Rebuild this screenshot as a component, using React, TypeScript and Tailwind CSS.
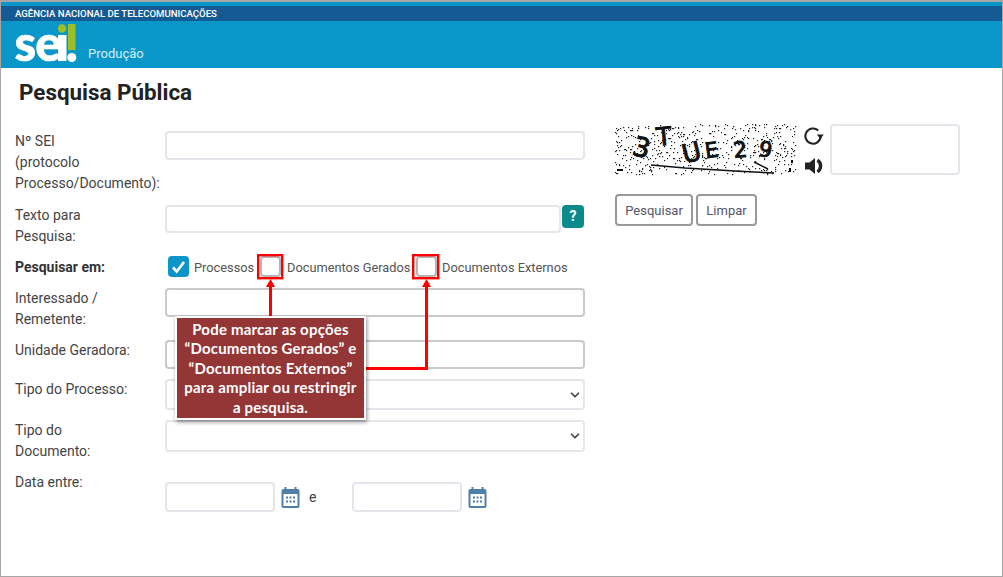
import { ChevronDown } from "lucide-react";

const captchaDots: [number, number][] = [];
let semente = 17;
for (let i = 0; i < 520; i++) {
  semente = (semente * 1103515245 + 12345) % 2147483648;
  const x = (semente >> 8) % 181;
  semente = (semente * 1103515245 + 12345) % 2147483648;
  captchaDots.push([x, (semente >> 8) % 51]);
}

function Logo() {
  return (
    <svg width="62" height="40" viewBox="0 0 62 40" className="block overflow-visible">
      <text x="-0.5" y="37" fill="#fff" stroke="#fff" strokeWidth="0.6" fontFamily="Lato, sans-serif" fontWeight="900" fontSize="49" letterSpacing="-1">
        se
      </text>
      <rect x="43" y="11" width="8.5" height="26" fill="#fff" />
      <circle cx="47" cy="4.5" r="4.2" fill="#9bbf25" />
      <rect x="53" y="0" width="7.5" height="26" fill="#9bbf25" />
      <circle cx="56.8" cy="33.5" r="4.5" fill="#fff" />
    </svg>
  );
}

function Captcha() {
  return (
    <svg width="181" height="51" viewBox="0 0 181 51" className="block shrink-0 overflow-visible">
      {captchaDots.map(([x, y], i) => (
        <rect key={i} x={x} y={y} width="1.2" height="1.2" fill="#222" />
      ))}
      <g fill="#111" stroke="#111" strokeWidth="0.9" fontFamily="'DejaVu Sans', sans-serif">
        <text x="18" y="33" fontSize="27" transform="rotate(14 27 24)">3</text>
        <text x="41" y="21" fontSize="25" transform="rotate(-5 50 10)">T</text>
        <text x="67" y="37" fontSize="26" transform="rotate(-14 78 28)">U</text>
        <text x="90" y="33" fontSize="21" transform="rotate(-8 99 26)">E</text>
        <text x="118" y="33" fontSize="22" transform="rotate(-6 127 25)">2</text>
        <text x="144" y="33" fontSize="21" transform="rotate(8 152 25)">9</text>
      </g>
      <path d="M36 41 L70 44 L120 47 L159 49 M139 38 L153 45" stroke="#111" strokeWidth="1.5" fill="none" />
      <path d="M2 46h6M177 36v3M175 44v4" stroke="#111" strokeWidth="2" fill="none" />
    </svg>
  );
}

function RefreshIcon() {
  return (
    <svg width="20" height="18" viewBox="0 0 20 18" className="block">
      <path d="M16.6 9.5a7.6 7.6 0 1 1-2.4-6" fill="none" stroke="#222" strokeWidth="2.1" />
      <path d="M12.8 7.5h7L16.3 12z" fill="#222" />
    </svg>
  );
}

function SpeakerIcon() {
  return (
    <svg width="20" height="18" viewBox="0 0 20 18" className="block">
      <path d="M1 5.5h4.5L11 1v16l-5.5-4.5H1z" fill="#222" />
      <path d="M13.5 3.2a7 7 0 0 1 0 11.6" fill="none" stroke="#222" strokeWidth="3.4" />
    </svg>
  );
}

function CalendarIcon() {
  return (
    <svg width="19" height="21" viewBox="0 0 19 21" className="block shrink-0">
      <rect x="0.5" y="2" width="18" height="19" rx="2" fill="#4f7ea8" />
      <rect x="3.5" y="0" width="2" height="4" fill="#4f7ea8" />
      <rect x="13.5" y="0" width="2" height="4" fill="#4f7ea8" />
      <rect x="2.5" y="7" width="14" height="12" fill="#fff" />
      {[5, 8.5, 12].map((x) =>
        [9.5, 13.5].map((y) => <rect key={`${x}-${y}`} x={x} y={y} width="2" height="2" fill="#4f7ea8" />)
      )}
    </svg>
  );
}

const inputClass = "block shrink-0 rounded border-2 border-[#e3e6ea] bg-white";

function Caixa({ marcada }: { marcada?: boolean }) {
  if (marcada) {
    return (
      <span className="flex size-[21px] shrink-0 items-center justify-center rounded bg-[#0d94c9]">
        <svg width="15" height="14" viewBox="0 0 15 14">
          <path d="M2 7.5l3.7 4L13 2" fill="none" stroke="#fff" strokeWidth="2.6" />
        </svg>
      </span>
    );
  }
  return <span className="block size-[21px] shrink-0 rounded border-2 border-[#b5b5b5] bg-white" />;
}

function Select({ className }: { className: string }) {
  return (
    <div className={`${inputClass} flex w-[420px] items-center justify-end pr-px ${className}`}>
      <ChevronDown size={14} strokeWidth={3} className="text-[#444]" />
    </div>
  );
}

export default function App() {
  return (
    <div className="relative h-[577px] w-[1003px] overflow-hidden border-x border-b border-[#a6a6a6] bg-white font-['Roboto',sans-serif] text-[14px] leading-[21px] text-[#444]">
      <div className="h-[2px] bg-[#a6a6a6]" />
      <div className="h-[4px] bg-[#0996c9]" />
      <header className="bg-[#0996c9]">
        <div className="flex h-[15px] items-center bg-[#155a93] pl-[14px] text-[9.6px] font-medium text-white">
          AGÊNCIA NACIONAL DE TELECOMUNICAÇÕES
        </div>
        <div className="flex h-[47px] items-start pl-[14px] pt-[3px]">
          <Logo />
          <span className="ml-[11px] mt-[19px] text-[13px] text-[#d5f0fb]">Produção</span>
        </div>
      </header>

      <main className="flex">
        <div className="w-[614px] shrink-0 pl-[14px]">
          <h1 className="ml-1 mt-[10px] text-[22.4px] font-bold leading-[28px] text-[#222]">Pesquisa Pública</h1>

          <div className="mt-[25px] flex h-[74px]">
            <div className="w-[150px] shrink-0">
              Nº SEI
              <br />
              (protocolo
              <br />
              Processo/Documento):
            </div>
            <div className={`${inputClass} h-[29px] w-[420px]`} />
          </div>

          <div className="flex h-[51px]">
            <div className="w-[150px] shrink-0">
              Texto para
              <br />
              Pesquisa:
            </div>
            <div className={`${inputClass} h-[28px] w-[396px]`} />
            <span className="ml-px flex h-[23px] w-[22px] items-center justify-center rounded bg-[#0b8a8c] text-[14px] font-bold text-white">
              ?
            </span>
          </div>

          <div className="flex h-[32px] items-start">
            <div className="w-[153px] shrink-0 pt-px font-bold text-[#333]">Pesquisar em:</div>
            <Caixa marcada />
            <span className="ml-[5px] w-[60px] whitespace-nowrap pt-px text-[12.8px] text-[#555]">Processos</span>
            <span className="ml-[6px]"><Caixa /></span>
            <span className="ml-[6px] w-[122px] whitespace-nowrap pt-px text-[12.8px] text-[#555]">Documentos Gerados</span>
            <span className="ml-[7px]"><Caixa /></span>
            <span className="ml-[5px] whitespace-nowrap pt-px text-[12.8px] text-[#555]">Documentos Externos</span>
          </div>

          <div className="flex h-[52px]">
            <div className="w-[150px] shrink-0">
              Interessado /
              <br />
              Remetente:
            </div>
            <div className="h-[29px] w-[420px] shrink-0 rounded border-2 border-[#c9c9c9] bg-white" />
          </div>

          <div className="flex h-[39px]">
            <div className="w-[150px] shrink-0">Unidade Geradora:</div>
            <div className="h-[29px] w-[420px] shrink-0 rounded border-2 border-[#c9c9c9] bg-white" />
          </div>

          <div className="flex h-[41px]">
            <div className="w-[150px] shrink-0">Tipo do Processo:</div>
            <Select className="h-[31px]" />
          </div>

          <div className="flex h-[51px]">
            <div className="w-[150px] shrink-0">
              Tipo do
              <br />
              Documento:
            </div>
            <Select className="h-[32px]" />
          </div>

          <div className="flex">
            <div className="w-[150px] shrink-0 pt-px">Data entre:</div>
            <div className="mt-[11px] flex items-center">
              <div className={`${inputClass} h-[30px] w-[110px]`} />
              <span className="ml-[6px]"><CalendarIcon /></span>
              <span className="ml-[9px] w-[43px]">e</span>
              <div className={`${inputClass} h-[30px] w-[110px]`} />
              <span className="ml-[6px]"><CalendarIcon /></span>
            </div>
          </div>
        </div>

        <div className="pt-[56px]">
          <div className="flex items-start">
            <Captcha />
            <div className="ml-[8px] mr-[6px] flex flex-col gap-[12px] pt-[3px]">
              <RefreshIcon />
              <SpeakerIcon />
            </div>
            <div className={`${inputClass} h-[51px] w-[130px]`} />
          </div>
          <div className="mt-[19px] flex gap-[3px] text-[13px]">
            <span className="flex h-[32px] w-[78px] items-center justify-center rounded border-2 border-[#999] text-[#556]">Pesquisar</span>
            <span className="flex h-[32px] w-[61px] items-center justify-center rounded border-2 border-[#999] text-[#556]">Limpar</span>
          </div>
        </div>
      </main>

      {/* anotações em vermelho por cima do formulário */}
      <svg width="1003" height="577" className="pointer-events-none absolute left-[-1px] top-0">
        <g fill="none" stroke="#f00" strokeWidth="2.4">
          <rect x="258.2" y="255.2" width="24" height="23" />
          <rect x="413.2" y="255.2" width="25" height="23" />
          <path d="M270.5 286V318" strokeWidth="3" />
          <path d="M426.5 286V368.5H364" strokeWidth="3" />
        </g>
        <path d="M270.5 279l-4.5 8h9zM426.5 279l-4.5 8h9z" fill="#f00" />
      </svg>
      <div className="absolute left-[174px] top-[316px] w-[191px] border-2 border-white bg-[#943635] pb-px pt-[2px] text-center font-['Lato',sans-serif] text-[15px] font-bold leading-[19.4px] tracking-[0.2px] text-white shadow-[1px_2px_4px_rgba(0,0,0,0.45)]">
        Pode marcar as opções
        <br />
        “Documentos Gerados” e
        <br />
        “Documentos Externos”
        <br />
        para ampliar ou restringir
        <br />a pesquisa.
      </div>
    </div>
  );
}
